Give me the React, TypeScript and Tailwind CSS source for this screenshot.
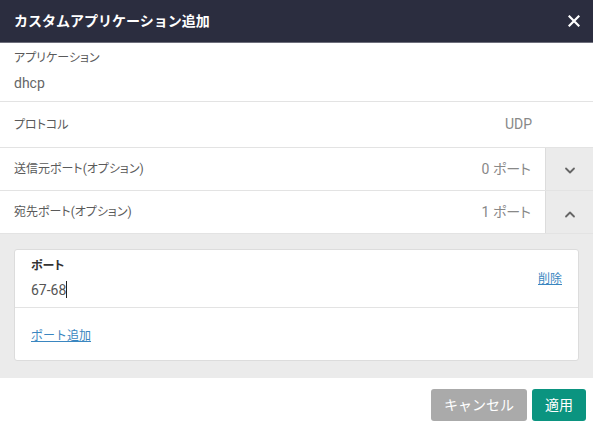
import React from "react";

const font = { fontFamily: 'Roboto, "Noto Sans CJK JP", sans-serif' };

function Chevron({ up }: { up?: boolean }) {
  return (
    <svg width="12" height="8" viewBox="0 0 12 8" fill="none">
      <path
        d={up ? "M2 6.5 L6 2.5 L10 6.5" : "M2 1.5 L6 5.5 L10 1.5"}
        stroke="#666"
        strokeWidth="1.8"
        strokeLinecap="round"
        strokeLinejoin="round"
      />
    </svg>
  );
}

export default function App() {
  return (
    <div className="w-[593px] h-[431px] bg-white flex flex-col overflow-hidden" style={font}>
      <div className="h-[43px] bg-[#2b2d3f] border-b border-[#6e6f7c] flex items-center justify-between pl-[14px] pr-[13px] shrink-0">
        <span className="text-white text-[14px] font-bold">カスタムアプリケーション追加</span>
        <svg width="12" height="12" viewBox="0 0 12 12">
          <path d="M1.5 1.5 L10.5 10.5 M10.5 1.5 L1.5 10.5" stroke="white" strokeWidth="2.2" strokeLinecap="square" />
        </svg>
      </div>
      <div className="h-[59px] border-b border-[#e3e3e3] px-[14px] pt-[7px] flex flex-col shrink-0">
        <span className="text-[12px] text-[#5a5a5a] leading-[16px] [font-feature-settings:'palt']">アプリケーション</span>
        <span className="text-[14px] text-[#666] leading-[20px] mt-[7px]">dhcp</span>
      </div>
      <div className="h-[46px] border-b border-[#e3e3e3] flex items-center justify-between pl-[14px] pr-[61px] shrink-0">
        <span className="text-[12px] text-[#5a5a5a] [font-feature-settings:'palt']">プロトコル</span>
        <span className="text-[14px] text-[#888]">UDP</span>
      </div>
      <div className="h-[43px] border-b border-[#e3e3e3] flex shrink-0">
        <div className="flex-1 flex items-center justify-between pl-[14px] pr-[14px]">
          <span className="text-[12px] text-[#5a5a5a] [font-feature-settings:'palt']">送信元ポート(オプション)</span>
          <span className="text-[14px] text-[#888] [font-feature-settings:'palt']">0 ポート</span>
        </div>
        <div className="w-[48px] bg-[#ebebeb] border-l border-[#dcdcdc] flex items-center justify-center pt-[4px]">
          <Chevron />
        </div>
      </div>
      <div className="h-[43px] border-b border-[#e3e3e3] flex shrink-0">
        <div className="flex-1 flex items-center justify-between pl-[14px] pr-[14px]">
          <span className="text-[12px] text-[#5a5a5a] [font-feature-settings:'palt']">宛先ポート(オプション)</span>
          <span className="text-[14px] text-[#888] [font-feature-settings:'palt']">1 ポート</span>
        </div>
        <div className="w-[48px] bg-[#ebebeb] border-l border-[#dcdcdc] flex items-center justify-center pt-[4px]">
          <Chevron up />
        </div>
      </div>
      <div className="h-[144px] bg-[#ebebeb] px-[14px] pt-[15px] shrink-0">
        <div className="bg-white border border-[#dcdcdc] rounded-[3px] flex flex-col">
          <div className="h-[58px] border-b border-[#e3e3e3] flex items-center justify-between pl-[16px] pr-[16px]">
            <div className="flex flex-col">
              <span className="text-[12px] font-bold text-[#333] leading-[16px] [font-feature-settings:'palt']">ポート</span>
              <span className="text-[14px] text-[#555] leading-[20px] mt-[6px] flex items-center">
                67-68<span className="inline-block w-px h-[17px] bg-[#222]" />
              </span>
            </div>
            <span className="text-[12px] text-[#3a86c0] underline mt-[1px]">削除</span>
          </div>
          <div className="h-[52px] flex items-center pl-[16px] pt-[4px]">
            <span className="text-[12px] text-[#3a86c0] underline">ポート追加</span>
          </div>
        </div>
      </div>
      <div className="flex-1 flex items-start justify-end pt-[11px] pr-[7px] gap-[5px]">
        <button className="h-[32px] w-[96px] rounded-[3px] bg-[#aaaaaa] text-white text-[14px]">キャンセル</button>
        <button className="h-[32px] w-[54px] rounded-[3px] bg-[#0b9480] text-white text-[14px]">適用</button>
      </div>
    </div>
  );
}
